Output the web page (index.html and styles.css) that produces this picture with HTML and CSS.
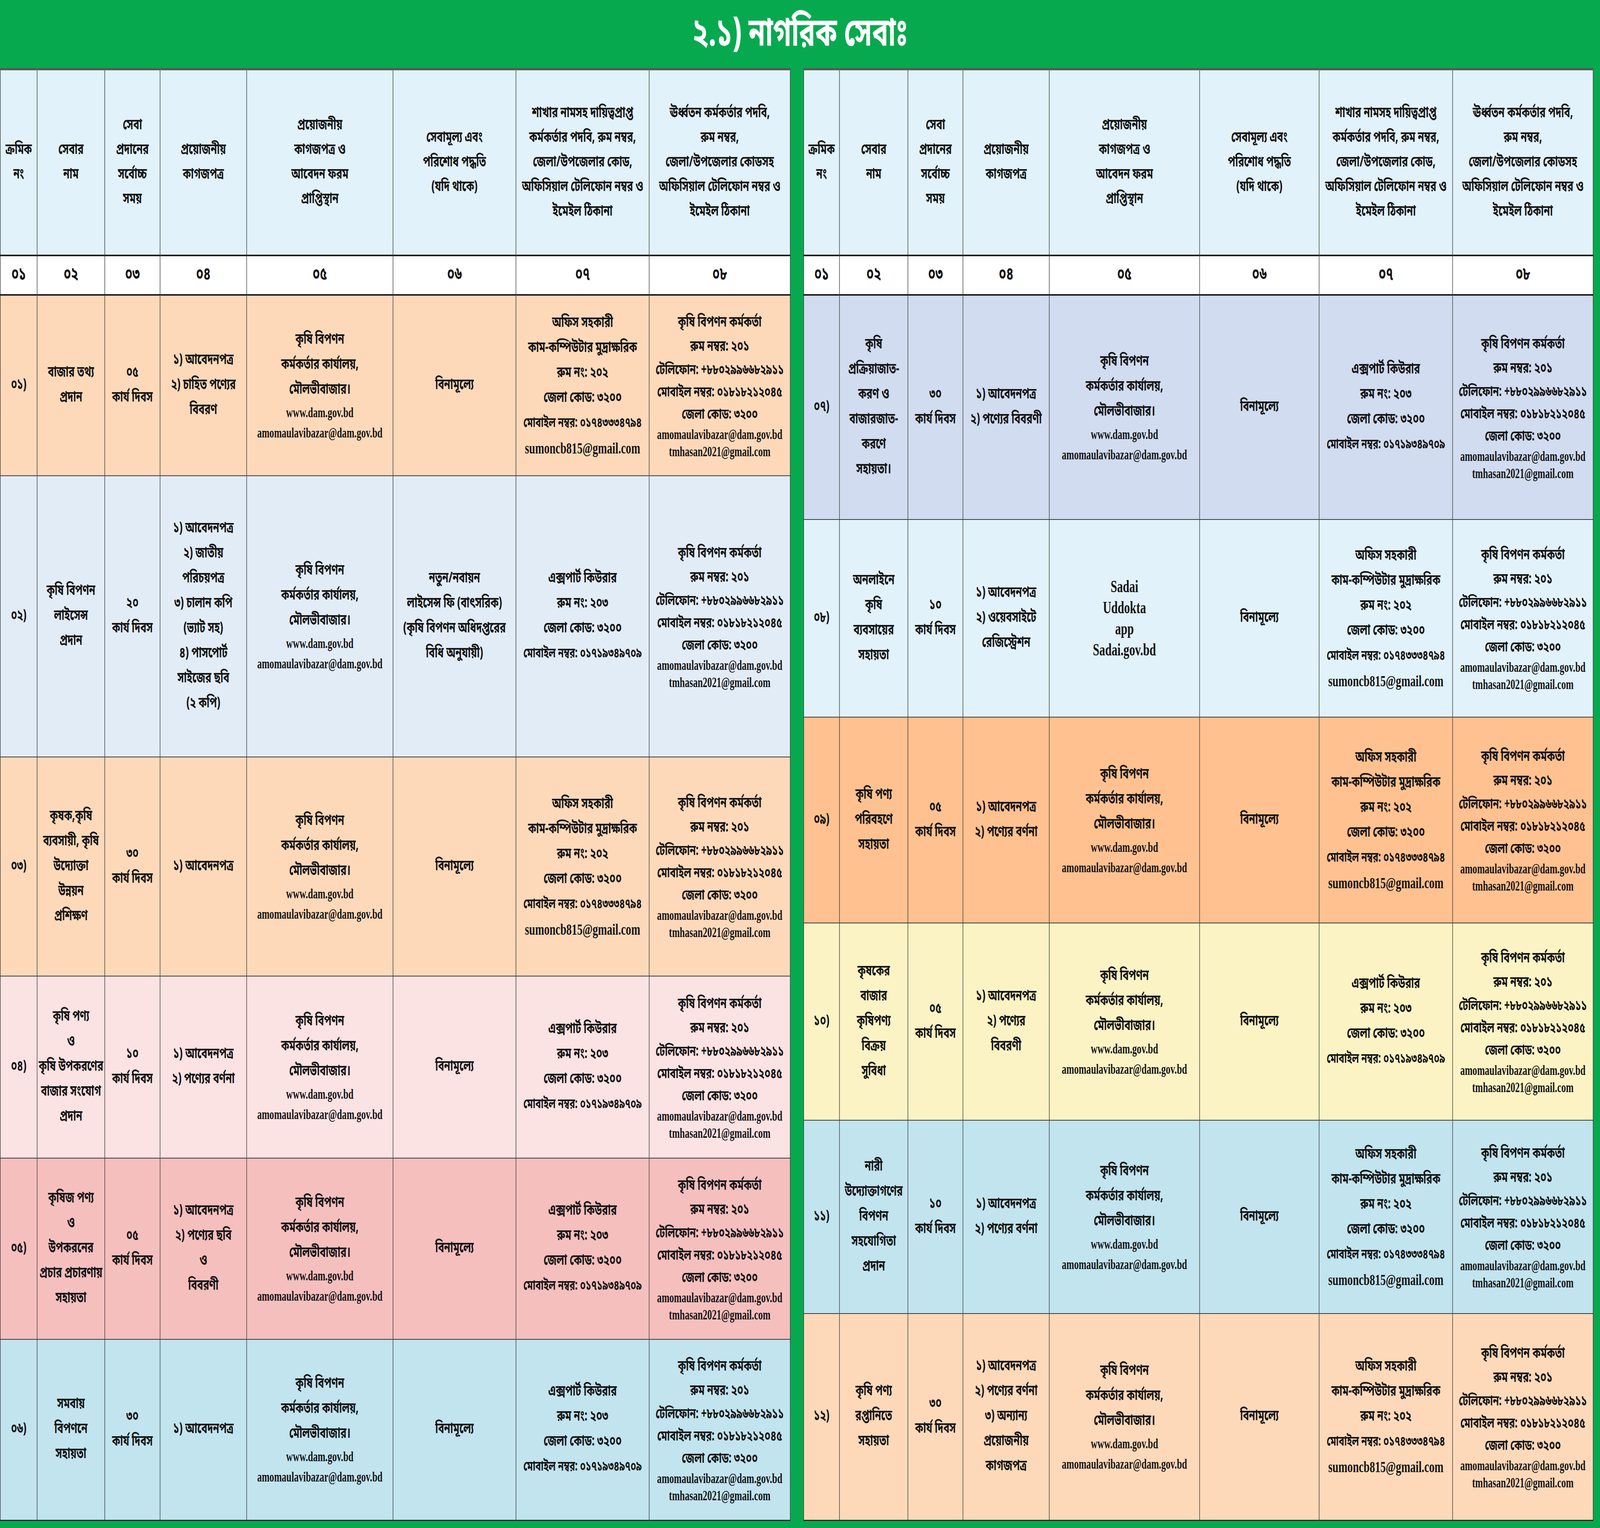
FILE: index.html
```html
<!DOCTYPE html>
<html lang="bn">
<head>
<meta charset="utf-8">
<title>নাগরিক সেবা</title>
<link rel="stylesheet" href="styles.css">
</head>
<body>
<div class="frame">
<div class="page">
<header class="title">২.১) নাগরিক সেবাঃ</header>
<main class="boards">
<table class="sheet left">
<colgroup><col class="c1"><col class="c2"><col class="c3"><col class="c4"><col class="c5"><col class="c6"><col class="c7"><col class="c8"></colgroup>
<thead>
<tr>
<th>ক্রমিক<br>নং</th>
<th>সেবার<br>নাম</th>
<th>সেবা<br>প্রদানের<br>সর্বোচ্চ<br>সময়</th>
<th>প্রয়োজনীয়<br>কাগজপত্র</th>
<th>প্রয়োজনীয়<br>কাগজপত্র ও<br>আবেদন ফরম<br>প্রাপ্তিস্থান</th>
<th>সেবামূল্য এবং<br>পরিশোধ পদ্ধতি<br>(যদি থাকে)</th>
<th>শাখার নামসহ দায়িত্বপ্রাপ্ত<br>কর্মকর্তার পদবি, রুম নম্বর,<br>জেলা/উপজেলার কোড,<br>অফিসিয়াল টেলিফোন নম্বর ও<br>ইমেইল ঠিকানা</th>
<th>ঊর্ধ্বতন কর্মকর্তার পদবি,<br>রুম নম্বর,<br>জেলা/উপজেলার কোডসহ<br>অফিসিয়াল টেলিফোন নম্বর ও<br>ইমেইল ঠিকানা</th>
</tr>
<tr class="nums"><td>০১</td><td>০২</td><td>০৩</td><td>০৪</td><td>০৫</td><td>০৬</td><td>০৭</td><td>০৮</td></tr>
</thead>
<tbody>
<tr class="peach">
<td>০১)</td>
<td>বাজার তথ্য<br>প্রদান</td>
<td>০৫<br>কার্য দিবস</td>
<td>১) আবেদনপত্র<br>২) চাহিত পণ্যের<br>বিবরণ</td>
<td><div>কৃষি বিপণন</div><div>কর্মকর্তার কার্যালয়,</div><div>মৌলভীবাজার।</div><div class="en">www.dam.gov.bd</div><div class="en">amomaulavibazar@dam.gov.bd</div></td>
<td>বিনামূল্যে</td>
<td><div>অফিস সহকারী</div><div>কাম-কম্পিউটার মুদ্রাক্ষরিক</div><div>রুম নং: ২০২</div><div>জেলা কোড: ৩২০০</div><div class="mob">মোবাইল নম্বর: ০১৭৪৩৩৩৪৭৯৪</div><div class="en big">sumoncb815@gmail.com</div></td>
<td class="sup"><div>কৃষি বিপণন কর্মকর্তা</div><div>রুম নম্বর: ২০১</div><div class="tel">টেলিফোন: +৮৮০২৯৯৬৬৮২৯১১</div><div class="tel">মোবাইল নম্বর: ০১৮১৮২১২০৪৫</div><div class="tel">জেলা কোড: ৩২০০</div><div class="en">amomaulavibazar@dam.gov.bd</div><div class="en">tmhasan2021@gmail.com</div></td>
</tr>
<tr class="blue">
<td>০২)</td>
<td>কৃষি বিপণন<br>লাইসেন্স<br>প্রদান</td>
<td>২০<br>কার্য দিবস</td>
<td>১) আবেদনপত্র<br>২) জাতীয়<br>পরিচয়পত্র<br>৩) চালান কপি<br>(ভ্যাট সহ)<br>৪) পাসপোর্ট<br>সাইজের ছবি<br>(২ কপি)</td>
<td><div>কৃষি বিপণন</div><div>কর্মকর্তার কার্যালয়,</div><div>মৌলভীবাজার।</div><div class="en">www.dam.gov.bd</div><div class="en">amomaulavibazar@dam.gov.bd</div></td>
<td>নতুন/নবায়ন<br>লাইসেন্স ফি (বাৎসরিক)<br>(কৃষি বিপণন অধিদপ্তরের<br>বিধি অনুযায়ী)</td>
<td><div>এক্সপার্ট কিউরার</div><div>রুম নং: ২০৩</div><div>জেলা কোড: ৩২০০</div><div class="mob">মোবাইল নম্বর: ০১৭১৯৩৪৯৭০৯</div></td>
<td class="sup"><div>কৃষি বিপণন কর্মকর্তা</div><div>রুম নম্বর: ২০১</div><div class="tel">টেলিফোন: +৮৮০২৯৯৬৬৮২৯১১</div><div class="tel">মোবাইল নম্বর: ০১৮১৮২১২০৪৫</div><div class="tel">জেলা কোড: ৩২০০</div><div class="en">amomaulavibazar@dam.gov.bd</div><div class="en">tmhasan2021@gmail.com</div></td>
</tr>
<tr class="peach">
<td>০৩)</td>
<td>কৃষক,কৃষি<br>ব্যবসায়ী, কৃষি<br>উদ্যোক্তা<br>উন্নয়ন<br>প্রশিক্ষণ</td>
<td>৩০<br>কার্য দিবস</td>
<td>১) আবেদনপত্র</td>
<td><div>কৃষি বিপণন</div><div>কর্মকর্তার কার্যালয়,</div><div>মৌলভীবাজার।</div><div class="en">www.dam.gov.bd</div><div class="en">amomaulavibazar@dam.gov.bd</div></td>
<td>বিনামূল্যে</td>
<td><div>অফিস সহকারী</div><div>কাম-কম্পিউটার মুদ্রাক্ষরিক</div><div>রুম নং: ২০২</div><div>জেলা কোড: ৩২০০</div><div class="mob">মোবাইল নম্বর: ০১৭৪৩৩৩৪৭৯৪</div><div class="en big">sumoncb815@gmail.com</div></td>
<td class="sup"><div>কৃষি বিপণন কর্মকর্তা</div><div>রুম নম্বর: ২০১</div><div class="tel">টেলিফোন: +৮৮০২৯৯৬৬৮২৯১১</div><div class="tel">মোবাইল নম্বর: ০১৮১৮২১২০৪৫</div><div class="tel">জেলা কোড: ৩২০০</div><div class="en">amomaulavibazar@dam.gov.bd</div><div class="en">tmhasan2021@gmail.com</div></td>
</tr>
<tr class="pink">
<td>০৪)</td>
<td>কৃষি পণ্য<br>ও<br>কৃষি উপকরণের<br>বাজার সংযোগ<br>প্রদান</td>
<td>১০<br>কার্য দিবস</td>
<td>১) আবেদনপত্র<br>২) পণ্যের বর্ণনা</td>
<td><div>কৃষি বিপণন</div><div>কর্মকর্তার কার্যালয়,</div><div>মৌলভীবাজার।</div><div class="en">www.dam.gov.bd</div><div class="en">amomaulavibazar@dam.gov.bd</div></td>
<td>বিনামূল্যে</td>
<td><div>এক্সপার্ট কিউরার</div><div>রুম নং: ২০৩</div><div>জেলা কোড: ৩২০০</div><div class="mob">মোবাইল নম্বর: ০১৭১৯৩৪৯৭০৯</div></td>
<td class="sup"><div>কৃষি বিপণন কর্মকর্তা</div><div>রুম নম্বর: ২০১</div><div class="tel">টেলিফোন: +৮৮০২৯৯৬৬৮২৯১১</div><div class="tel">মোবাইল নম্বর: ০১৮১৮২১২০৪৫</div><div class="tel">জেলা কোড: ৩২০০</div><div class="en">amomaulavibazar@dam.gov.bd</div><div class="en">tmhasan2021@gmail.com</div></td>
</tr>
<tr class="rose">
<td>০৫)</td>
<td>কৃষিজ পণ্য<br>ও<br>উপকরনের<br>প্রচার প্রচারণায়<br>সহায়তা</td>
<td>০৫<br>কার্য দিবস</td>
<td>১) আবেদনপত্র<br>২) পণ্যের ছবি<br>ও<br>বিবরণী</td>
<td><div>কৃষি বিপণন</div><div>কর্মকর্তার কার্যালয়,</div><div>মৌলভীবাজার।</div><div class="en">www.dam.gov.bd</div><div class="en">amomaulavibazar@dam.gov.bd</div></td>
<td>বিনামূল্যে</td>
<td><div>এক্সপার্ট কিউরার</div><div>রুম নং: ২০৩</div><div>জেলা কোড: ৩২০০</div><div class="mob">মোবাইল নম্বর: ০১৭১৯৩৪৯৭০৯</div></td>
<td class="sup"><div>কৃষি বিপণন কর্মকর্তা</div><div>রুম নম্বর: ২০১</div><div class="tel">টেলিফোন: +৮৮০২৯৯৬৬৮২৯১১</div><div class="tel">মোবাইল নম্বর: ০১৮১৮২১২০৪৫</div><div class="tel">জেলা কোড: ৩২০০</div><div class="en">amomaulavibazar@dam.gov.bd</div><div class="en">tmhasan2021@gmail.com</div></td>
</tr>
<tr class="cyan">
<td>০৬)</td>
<td>সমবায়<br>বিপণনে<br>সহায়তা</td>
<td>৩০<br>কার্য দিবস</td>
<td>১) আবেদনপত্র</td>
<td><div>কৃষি বিপণন</div><div>কর্মকর্তার কার্যালয়,</div><div>মৌলভীবাজার।</div><div class="en">www.dam.gov.bd</div><div class="en">amomaulavibazar@dam.gov.bd</div></td>
<td>বিনামূল্যে</td>
<td><div>এক্সপার্ট কিউরার</div><div>রুম নং: ২০৩</div><div>জেলা কোড: ৩২০০</div><div class="mob">মোবাইল নম্বর: ০১৭১৯৩৪৯৭০৯</div></td>
<td class="sup"><div>কৃষি বিপণন কর্মকর্তা</div><div>রুম নম্বর: ২০১</div><div class="tel">টেলিফোন: +৮৮০২৯৯৬৬৮২৯১১</div><div class="tel">মোবাইল নম্বর: ০১৮১৮২১২০৪৫</div><div class="tel">জেলা কোড: ৩২০০</div><div class="en">amomaulavibazar@dam.gov.bd</div><div class="en">tmhasan2021@gmail.com</div></td>
</tr>
</tbody>
</table>

<table class="sheet right">
<colgroup><col class="c1"><col class="c2"><col class="c3"><col class="c4"><col class="c5"><col class="c6"><col class="c7"><col class="c8"></colgroup>
<thead>
<tr>
<th>ক্রমিক<br>নং</th>
<th>সেবার<br>নাম</th>
<th>সেবা<br>প্রদানের<br>সর্বোচ্চ<br>সময়</th>
<th>প্রয়োজনীয়<br>কাগজপত্র</th>
<th>প্রয়োজনীয়<br>কাগজপত্র ও<br>আবেদন ফরম<br>প্রাপ্তিস্থান</th>
<th>সেবামূল্য এবং<br>পরিশোধ পদ্ধতি<br>(যদি থাকে)</th>
<th>শাখার নামসহ দায়িত্বপ্রাপ্ত<br>কর্মকর্তার পদবি, রুম নম্বর,<br>জেলা/উপজেলার কোড,<br>অফিসিয়াল টেলিফোন নম্বর ও<br>ইমেইল ঠিকানা</th>
<th>ঊর্ধ্বতন কর্মকর্তার পদবি,<br>রুম নম্বর,<br>জেলা/উপজেলার কোডসহ<br>অফিসিয়াল টেলিফোন নম্বর ও<br>ইমেইল ঠিকানা</th>
</tr>
<tr class="nums"><td>০১</td><td>০২</td><td>০৩</td><td>০৪</td><td>০৫</td><td>০৬</td><td>০৭</td><td>০৮</td></tr>
</thead>
<tbody>
<tr class="lav">
<td>০৭)</td>
<td>কৃষি<br>প্রক্রিয়াজাত-<br>করণ ও<br>বাজারজাত-<br>করণে<br>সহায়তা।</td>
<td>৩০<br>কার্য দিবস</td>
<td>১) আবেদনপত্র<br>২) পণ্যের বিবরণী</td>
<td><div>কৃষি বিপণন</div><div>কর্মকর্তার কার্যালয়,</div><div>মৌলভীবাজার।</div><div class="en">www.dam.gov.bd</div><div class="en">amomaulavibazar@dam.gov.bd</div></td>
<td>বিনামূল্যে</td>
<td><div>এক্সপার্ট কিউরার</div><div>রুম নং: ২০৩</div><div>জেলা কোড: ৩২০০</div><div class="mob">মোবাইল নম্বর: ০১৭১৯৩৪৯৭০৯</div></td>
<td class="sup"><div>কৃষি বিপণন কর্মকর্তা</div><div>রুম নম্বর: ২০১</div><div class="tel">টেলিফোন: +৮৮০২৯৯৬৬৮২৯১১</div><div class="tel">মোবাইল নম্বর: ০১৮১৮২১২০৪৫</div><div class="tel">জেলা কোড: ৩২০০</div><div class="en">amomaulavibazar@dam.gov.bd</div><div class="en">tmhasan2021@gmail.com</div></td>
</tr>
<tr class="ice">
<td>০৮)</td>
<td>অনলাইনে<br>কৃষি<br>ব্যবসায়ের<br>সহায়তা</td>
<td>১০<br>কার্য দিবস</td>
<td>১) আবেদনপত্র<br>২) ওয়েবসাইটে<br>রেজিস্ট্রেশন</td>
<td><div class="en app">Sadai</div><div class="en app">Uddokta</div><div class="en app">app</div><div class="en app">Sadai.gov.bd</div></td>
<td>বিনামূল্যে</td>
<td><div>অফিস সহকারী</div><div>কাম-কম্পিউটার মুদ্রাক্ষরিক</div><div>রুম নং: ২০২</div><div>জেলা কোড: ৩২০০</div><div class="mob">মোবাইল নম্বর: ০১৭৪৩৩৩৪৭৯৪</div><div class="en big">sumoncb815@gmail.com</div></td>
<td class="sup"><div>কৃষি বিপণন কর্মকর্তা</div><div>রুম নম্বর: ২০১</div><div class="tel">টেলিফোন: +৮৮০২৯৯৬৬৮২৯১১</div><div class="tel">মোবাইল নম্বর: ০১৮১৮২১২০৪৫</div><div class="tel">জেলা কোড: ৩২০০</div><div class="en">amomaulavibazar@dam.gov.bd</div><div class="en">tmhasan2021@gmail.com</div></td>
</tr>
<tr class="orange">
<td>০৯)</td>
<td>কৃষি পণ্য<br>পরিবহণে<br>সহায়তা</td>
<td>০৫<br>কার্য দিবস</td>
<td>১) আবেদনপত্র<br>২) পণ্যের বর্ণনা</td>
<td><div>কৃষি বিপণন</div><div>কর্মকর্তার কার্যালয়,</div><div>মৌলভীবাজার।</div><div class="en">www.dam.gov.bd</div><div class="en">amomaulavibazar@dam.gov.bd</div></td>
<td>বিনামূল্যে</td>
<td><div>অফিস সহকারী</div><div>কাম-কম্পিউটার মুদ্রাক্ষরিক</div><div>রুম নং: ২০২</div><div>জেলা কোড: ৩২০০</div><div class="mob">মোবাইল নম্বর: ০১৭৪৩৩৩৪৭৯৪</div><div class="en big">sumoncb815@gmail.com</div></td>
<td class="sup"><div>কৃষি বিপণন কর্মকর্তা</div><div>রুম নম্বর: ২০১</div><div class="tel">টেলিফোন: +৮৮০২৯৯৬৬৮২৯১১</div><div class="tel">মোবাইল নম্বর: ০১৮১৮২১২০৪৫</div><div class="tel">জেলা কোড: ৩২০০</div><div class="en">amomaulavibazar@dam.gov.bd</div><div class="en">tmhasan2021@gmail.com</div></td>
</tr>
<tr class="cream">
<td>১০)</td>
<td>কৃষকের<br>বাজার<br>কৃষিপণ্য<br>বিক্রয়<br>সুবিধা</td>
<td>০৫<br>কার্য দিবস</td>
<td>১) আবেদনপত্র<br>২) পণ্যের<br>বিবরণী</td>
<td><div>কৃষি বিপণন</div><div>কর্মকর্তার কার্যালয়,</div><div>মৌলভীবাজার।</div><div class="en">www.dam.gov.bd</div><div class="en">amomaulavibazar@dam.gov.bd</div></td>
<td>বিনামূল্যে</td>
<td><div>এক্সপার্ট কিউরার</div><div>রুম নং: ২০৩</div><div>জেলা কোড: ৩২০০</div><div class="mob">মোবাইল নম্বর: ০১৭১৯৩৪৯৭০৯</div></td>
<td class="sup"><div>কৃষি বিপণন কর্মকর্তা</div><div>রুম নম্বর: ২০১</div><div class="tel">টেলিফোন: +৮৮০২৯৯৬৬৮২৯১১</div><div class="tel">মোবাইল নম্বর: ০১৮১৮২১২০৪৫</div><div class="tel">জেলা কোড: ৩২০০</div><div class="en">amomaulavibazar@dam.gov.bd</div><div class="en">tmhasan2021@gmail.com</div></td>
</tr>
<tr class="cyan">
<td>১১)</td>
<td>নারী<br>উদ্যোক্তাগণের<br>বিপণন<br>সহযোগিতা<br>প্রদান</td>
<td>১০<br>কার্য দিবস</td>
<td>১) আবেদনপত্র<br>২) পণ্যের বর্ণনা</td>
<td><div>কৃষি বিপণন</div><div>কর্মকর্তার কার্যালয়,</div><div>মৌলভীবাজার।</div><div class="en">www.dam.gov.bd</div><div class="en">amomaulavibazar@dam.gov.bd</div></td>
<td>বিনামূল্যে</td>
<td><div>অফিস সহকারী</div><div>কাম-কম্পিউটার মুদ্রাক্ষরিক</div><div>রুম নং: ২০২</div><div>জেলা কোড: ৩২০০</div><div class="mob">মোবাইল নম্বর: ০১৭৪৩৩৩৪৭৯৪</div><div class="en big">sumoncb815@gmail.com</div></td>
<td class="sup"><div>কৃষি বিপণন কর্মকর্তা</div><div>রুম নম্বর: ২০১</div><div class="tel">টেলিফোন: +৮৮০২৯৯৬৬৮২৯১১</div><div class="tel">মোবাইল নম্বর: ০১৮১৮২১২০৪৫</div><div class="tel">জেলা কোড: ৩২০০</div><div class="en">amomaulavibazar@dam.gov.bd</div><div class="en">tmhasan2021@gmail.com</div></td>
</tr>
<tr class="peach">
<td>১২)</td>
<td>কৃষি পণ্য<br>রপ্তানিতে<br>সহায়তা</td>
<td>৩০<br>কার্য দিবস</td>
<td>১) আবেদনপত্র<br>২) পণ্যের বর্ণনা<br>৩) অন্যান্য<br>প্রয়োজনীয়<br>কাগজপত্র</td>
<td><div>কৃষি বিপণন</div><div>কর্মকর্তার কার্যালয়,</div><div>মৌলভীবাজার।</div><div class="en">www.dam.gov.bd</div><div class="en">amomaulavibazar@dam.gov.bd</div></td>
<td>বিনামূল্যে</td>
<td><div>অফিস সহকারী</div><div>কাম-কম্পিউটার মুদ্রাক্ষরিক</div><div>রুম নং: ২০২</div><div class="mob">মোবাইল নম্বর: ০১৭৪৩৩৩৪৭৯৪</div><div class="en big">sumoncb815@gmail.com</div></td>
<td class="sup"><div>কৃষি বিপণন কর্মকর্তা</div><div>রুম নম্বর: ২০১</div><div class="tel">টেলিফোন: +৮৮০২৯৯৬৬৮২৯১১</div><div class="tel">মোবাইল নম্বর: ০১৮১৮২১২০৪৫</div><div class="tel">জেলা কোড: ৩২০০</div><div class="en">amomaulavibazar@dam.gov.bd</div><div class="en">tmhasan2021@gmail.com</div></td>
</tr>
</tbody>
</table>
</main>
</div>
</div>
</body>
</html>
```

FILE: styles.css
```css
* { box-sizing: border-box; }
html, body {
  margin: 0;
  padding: 0;
  overflow: hidden;
  background: #07a94f;
}
body {
  color: #141414;
  font-family: "Noto Sans Bengali", "Noto Serif Bengali", "Lohit Bengali", "Mukti Narrow", "Mukti", "FreeSerif", "Noto Sans", sans-serif;
}
/* The window frame; the board inside is drawn on a 6078 x 3912 grid and fitted to it. */
.frame {
  width: 100vw;
  height: 100vh;
  overflow: hidden;
}
.page {
  width: 6078px;
  height: 3912px;
  transform-origin: 0 0;
  transform: scale(0.673906, 1);
  transform: scale(calc(100vw / 6078px), calc(100vh / 3912px));
}
.title {
  height: 174px;
  display: flex;
  align-items: center;
  justify-content: center;
  color: #ffffff;
  font-size: 102px;
  font-weight: 700;
  line-height: 1;
  padding-top: 8px;
}
.boards {
  display: flex;
  align-items: flex-start;
  gap: 49px;
}
.sheet {
  border-collapse: collapse;
  table-layout: fixed;
}
.sheet.left { width: 3001px; }
.sheet.right { width: 2999px; }
.left .c1 { width: 140px; }
.left .c2 { width: 257px; }
.left .c3 { width: 210px; }
.left .c4 { width: 329px; }
.left .c5 { width: 556px; }
.left .c6 { width: 467px; }
.left .c7 { width: 506px; }
.left .c8 { width: 536px; }
.right .c1 { width: 136px; }
.right .c2 { width: 260px; }
.right .c3 { width: 209px; }
.right .c4 { width: 328px; }
.right .c5 { width: 571px; }
.right .c6 { width: 454px; }
.right .c7 { width: 507px; }
.right .c8 { width: 534px; }

.sheet th, .sheet td {
  border: 2px solid #3b3b3b;
  text-align: center;
  vertical-align: middle;
  padding: 0 2px;
  font-size: 38px;
  line-height: 64px;
  font-weight: 700;
  white-space: nowrap;
}
.sheet thead th {
  background: #e1f2fa;
  height: 477px;
  line-height: 63px;
  font-weight: 700;
  border-top: 6px solid #5a5a5a;
}
.sheet .nums td {
  background: #ffffff;
  height: 101px;
  font-size: 46px;
  border-top: 4px solid #1e1e1e;
  border-bottom: 4px solid #1e1e1e;
}
.sheet tbody tr:last-child td { border-bottom: 3px solid #2a2a2a; }

.left tbody tr:nth-child(1) { height: 463px; }
.left tbody tr:nth-child(2) { height: 720px; }
.left tbody tr:nth-child(3) { height: 561px; }
.left tbody tr:nth-child(4) { height: 466px; }
.left tbody tr:nth-child(5) { height: 464px; }
.left tbody tr:nth-child(6) { height: 463px; }
.right tbody tr:nth-child(1) { height: 575px; }
.right tbody tr:nth-child(2) { height: 506px; }
.right tbody tr:nth-child(3) { height: 527px; }
.right tbody tr:nth-child(4) { height: 505px; }
.right tbody tr:nth-child(5) { height: 495px; }
.right tbody tr:nth-child(6) { height: 529px; }

.peach td { background: #fdd9b9; }
.blue td { background: #e2ecf7; }
.pink td { background: #fbe2e3; }
.rose td { background: #f5bfbe; }
.cyan td { background: #c1e4ef; }
.lav td { background: #d1dcf0; }
.ice td { background: #e1f2fa; }
.orange td { background: #ffc18f; }
.cream td { background: #fbf3c4; }

.en {
  font-family: "Liberation Serif", "Times New Roman", serif;
  font-weight: 700;
  font-size: 35px;
  line-height: 52px;
}
.en.big { font-size: 41px; line-height: 62px; }
.en.app { font-size: 44px; line-height: 54px; }
.mob { font-size: 35px; line-height: 64px; }
.sup div { line-height: 62px; }
.sup .tel { font-size: 37px; line-height: 57px; }
.sup .en { line-height: 44px; }
```
